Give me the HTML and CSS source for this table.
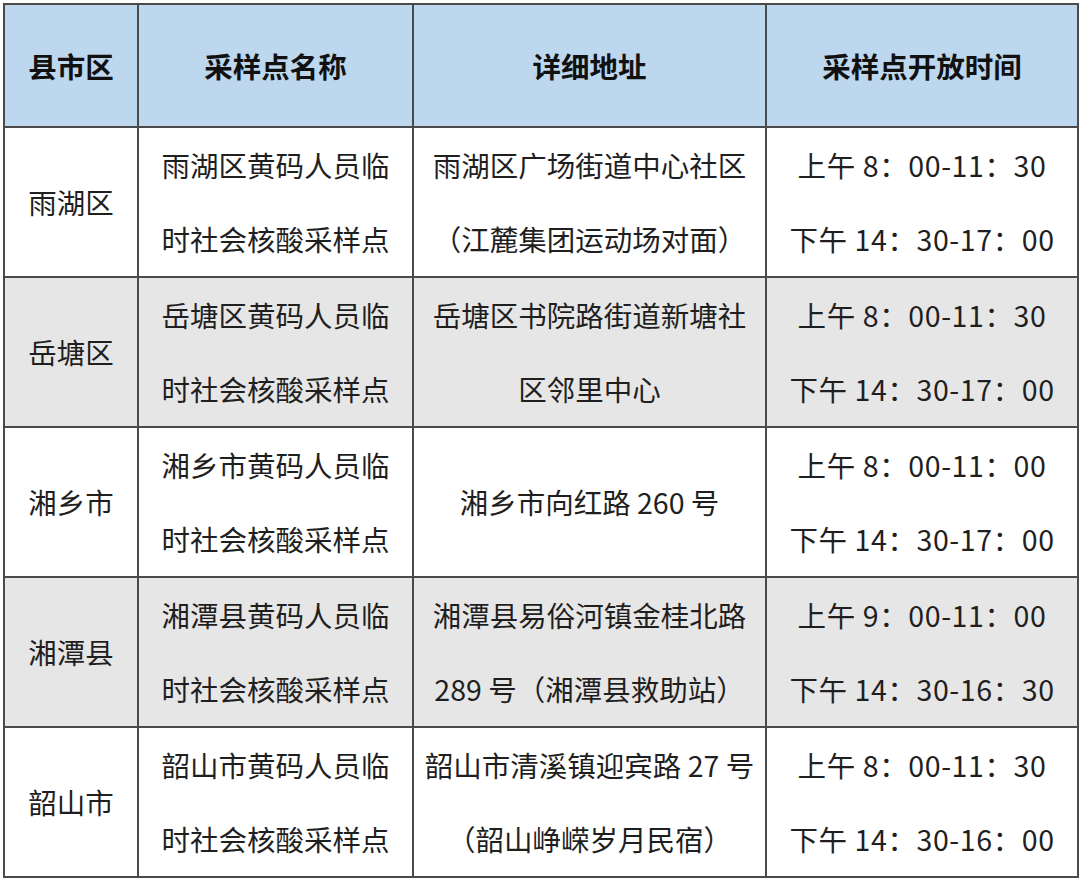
FILE: index.html
```html
<!DOCTYPE html>
<html lang="zh-CN">
<head>
<meta charset="utf-8">
<title>采样点</title>
<link rel="stylesheet" href="styles.css">
</head>
<body>
<table class="sites">
  <colgroup>
    <col class="c1"><col class="c2"><col class="c3"><col class="c4">
  </colgroup>
  <thead>
    <tr class="head">
      <th>县市区</th>
      <th>采样点名称</th>
      <th>详细地址</th>
      <th>采样点开放时间</th>
    </tr>
  </thead>
  <tbody>
    <tr>
      <td>雨湖区</td>
      <td>雨湖区黄码人员临<br>时社会核酸采样点</td>
      <td>雨湖区广场街道中心社区<br>（江麓集团运动场对面）</td>
      <td class="time">上午 8：00-11：30<br>下午 14：30-17：00</td>
    </tr>
    <tr class="alt">
      <td>岳塘区</td>
      <td>岳塘区黄码人员临<br>时社会核酸采样点</td>
      <td>岳塘区书院路街道新塘社<br>区邻里中心</td>
      <td class="time">上午 8：00-11：30<br>下午 14：30-17：00</td>
    </tr>
    <tr>
      <td>湘乡市</td>
      <td>湘乡市黄码人员临<br>时社会核酸采样点</td>
      <td>湘乡市向红路 260 号</td>
      <td class="time">上午 8：00-11：00<br>下午 14：30-17：00</td>
    </tr>
    <tr class="alt">
      <td>湘潭县</td>
      <td>湘潭县黄码人员临<br>时社会核酸采样点</td>
      <td>湘潭县易俗河镇金桂北路<br>289 号（湘潭县救助站）</td>
      <td class="time">上午 9：00-11：00<br>下午 14：30-16：30</td>
    </tr>
    <tr>
      <td>韶山市</td>
      <td>韶山市黄码人员临<br>时社会核酸采样点</td>
      <td>韶山市清溪镇迎宾路 27 号<br>（韶山峥嵘岁月民宿）</td>
      <td class="time">上午 8：00-11：30<br>下午 14：30-16：00</td>
    </tr>
  </tbody>
</table>
</body>
</html>
```

FILE: styles.css
```css
html, body {
  margin: 0;
  padding: 0;
  background: #ffffff;
}
body {
  padding: 3px 0 0 3px;
  font-family: "Noto Sans CJK SC", "Noto Sans", sans-serif;
  color: #1f1f1f;
}
.sites {
  border-collapse: collapse;
  table-layout: fixed;
  width: 1074px;
}
.c1 { width: 134px; }
.c2 { width: 275px; }
.c3 { width: 353px; }
.c4 { width: 312px; }
.sites th,
.sites td {
  border: 2px solid #4a4a4a;
  text-align: center;
  vertical-align: middle;
  padding: 0;
  font-size: 28.5px;
  line-height: 74px;
  white-space: nowrap;
}
.head th {
  background: #bdd7ee;
  height: 121px;
  font-weight: 700;
  color: #111;
}
.sites tbody tr {
  height: 150px;
}
.sites tbody td {
  font-weight: 400;
  height: 148px;
}
.sites td.time {
  letter-spacing: 0.6px;
}
.alt td {
  background: #e7e6e6;
}
```
